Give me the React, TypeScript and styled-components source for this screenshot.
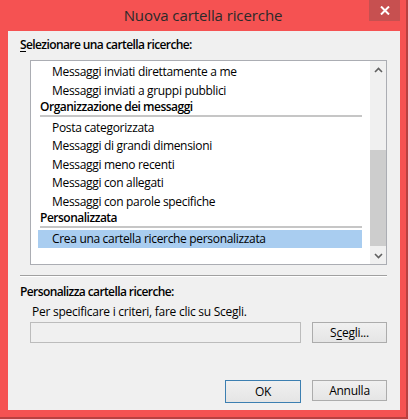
import React from "react";
import styled, { createGlobalStyle } from "styled-components";

const Global = createGlobalStyle`
  html, body { margin: 0; padding: 0; }
  body {
    width: 408px; height: 419px; overflow: hidden;
    background: #b94040;
    font-family: "Open Sans", "Noto Sans", sans-serif;
  }
`;

const Window = styled.div`
  width: 406px;
  height: 417px;
  background: #f55252;
  display: flex;
  flex-direction: column;
  box-sizing: border-box;
`;

const TitleBar = styled.div`
  height: 31px;
  display: flex;
  align-items: flex-start;
  position: relative;
  flex: none;
`;

const Title = styled.div`
  flex: 1;
  text-align: center;
  font-size: 15px;
  line-height: 20px;
  margin-top: 5px;
  color: #2a2a2a;
  letter-spacing: -0.1px;
`;

const CloseBtn = styled.div`
  position: absolute;
  top: 0;
  left: 369px;
  width: 31px;
  height: 21px;
  background: #c75050;
  display: flex;
  align-items: center;
  justify-content: center;
`;

const Client = styled.div`
  margin: 0 6px 0 8px;
  width: 392px;
  height: 379px;
  background: #f0f0f0;
  box-sizing: border-box;
  padding: 6px 13px 0 12px;
  display: flex;
  flex-direction: column;
  font-size: 12px;
  color: #000;
`;

const GroupLabel = styled.div`
  font-weight: 600;
  line-height: 16px;
  height: 16px;
  letter-spacing: -0.6px;
`;

const U = styled.span`
  text-decoration: underline;
  text-underline-offset: 2px;
`;

const ListBox = styled.div`
  margin: 7px 0 0 10px;
  width: 357px;
  height: 205px;
  box-sizing: border-box;
  border: 1px solid #abadb3;
  background: #fff;
  display: flex;
`;

const ListItems = styled.div`
  flex: 1;
  padding-top: 2px;
  display: flex;
  flex-direction: column;
`;

const Row = styled.div<{ $selected?: boolean }>`
  height: 18.5px;
  margin: 0 8px 0 7px;
  padding-left: 14px;
  line-height: 18.5px;
  white-space: nowrap;
  background: ${(p) => (p.$selected ? "#a9cdf0" : "transparent")};
  letter-spacing: -0.32px;
`;

const Header = styled.div`
  height: 18.5px;
  margin: 0 8px 0 9px;
  display: flex;
  flex-direction: column;
`;

const HeaderText = styled.div`
  font-weight: 600;
  line-height: 13px;
  height: 13px;
  white-space: nowrap;
  letter-spacing: -0.5px;
`;

const HeaderLine = styled.div`
  margin-top: 2px;
  height: 2px;
  background: #c6c6c6;
`;

const ScrollBar = styled.div`
  width: 16px;
  background: #f0f0f0;
  display: flex;
  flex-direction: column;
  flex: none;
`;

const ScrollArrow = styled.div`
  height: 17px;
  display: flex;
  align-items: center;
  justify-content: center;
  flex: none;
`;

const ScrollSpace = styled.div<{ $h: number }>`
  height: ${(p) => p.$h}px;
  flex: none;
`;

const Thumb = styled.div`
  height: 96px;
  background: #cdcdcd;
  flex: none;
`;

const Separator = styled.div`
  margin-top: 10px;
  width: 367px;
  height: 1px;
  background: #a0a0a0;
  border-bottom: 1px solid #ffffff;
`;

const Label2 = styled(GroupLabel)`
  margin-top: 7px;
`;

const Hint = styled.div`
  margin-top: 4px;
  padding-left: 12px;
  line-height: 16px;
  height: 16px;
  letter-spacing: -0.26px;
`;

const InputRow = styled.div`
  margin-top: 2px;
  display: flex;
  align-items: center;
  padding-left: 10px;
  gap: 11px;
`;

const TextBox = styled.div`
  width: 271px;
  height: 21px;
  box-sizing: border-box;
  border: 1px solid #bcbcbc;
  background: #f0f0f0;
`;

const Button = styled.div<{ $default?: boolean }>`
  width: ${(p) => (p.$default ? 76 : 75)}px;
  height: ${(p) => (p.$default ? 23 : 21)}px;
  box-sizing: border-box;
  border: 1px solid ${(p) => (p.$default ? "#3c7fb1" : "#acacac")};
  background: linear-gradient(#f0f0f0, #e5e5e5);
  display: flex;
  align-items: center;
  justify-content: center;
  line-height: 16px;
  letter-spacing: -0.25px;
`;

const ButtonRow = styled.div`
  margin-top: 37px;
  display: flex;
  justify-content: flex-end;
  gap: 11px;
`;

const Chevron = ({ up }: { up?: boolean }) => (
  <svg width="9" height="6" viewBox="0 0 9 6">
    <path
      d={up ? "M1 5 L4.5 1.5 L8 5" : "M1 1 L4.5 4.5 L8 1"}
      fill="none"
      stroke="#606060"
      strokeWidth="1.6"
    />
  </svg>
);

export default function App() {
  return (
    <>
      <Global />
      <Window>
        <TitleBar>
          <Title>Nuova cartella ricerche</Title>
          <CloseBtn>
            <svg width="10" height="9" viewBox="0 0 10 9">
              <path d="M1 0.5 L9 8.5 M9 0.5 L1 8.5" stroke="#fff" strokeWidth="2" />
            </svg>
          </CloseBtn>
        </TitleBar>
        <Client>
          <GroupLabel>
            <U>S</U>elezionare una cartella ricerche:
          </GroupLabel>
          <ListBox>
            <ListItems>
              <Row>Messaggi inviati direttamente a me</Row>
              <Row>Messaggi inviati a gruppi pubblici</Row>
              <Header>
                <HeaderText>Organizzazione dei messaggi</HeaderText>
                <HeaderLine />
              </Header>
              <Row>Posta categorizzata</Row>
              <Row>Messaggi di grandi dimensioni</Row>
              <Row>Messaggi meno recenti</Row>
              <Row>Messaggi con allegati</Row>
              <Row>Messaggi con parole specifiche</Row>
              <Header>
                <HeaderText>Personalizzata</HeaderText>
                <HeaderLine />
              </Header>
              <Row $selected>Crea una cartella ricerche personalizzata</Row>
            </ListItems>
            <ScrollBar>
              <ScrollArrow>
                <Chevron up />
              </ScrollArrow>
              <ScrollSpace $h={72} />
              <Thumb />
              <ScrollSpace $h={1} />
              <ScrollArrow>
                <Chevron />
              </ScrollArrow>
            </ScrollBar>
          </ListBox>
          <Separator />
          <Label2>Personalizza cartella ricerche:</Label2>
          <Hint>Per specificare i criteri, fare clic su Scegli.</Hint>
          <InputRow>
            <TextBox />
            <Button>
              <span>
                S<U>c</U>egli...
              </span>
            </Button>
          </InputRow>
          <ButtonRow>
            <Button $default>OK</Button>
            <Button>Annulla</Button>
          </ButtonRow>
        </Client>
      </Window>
    </>
  );
}
